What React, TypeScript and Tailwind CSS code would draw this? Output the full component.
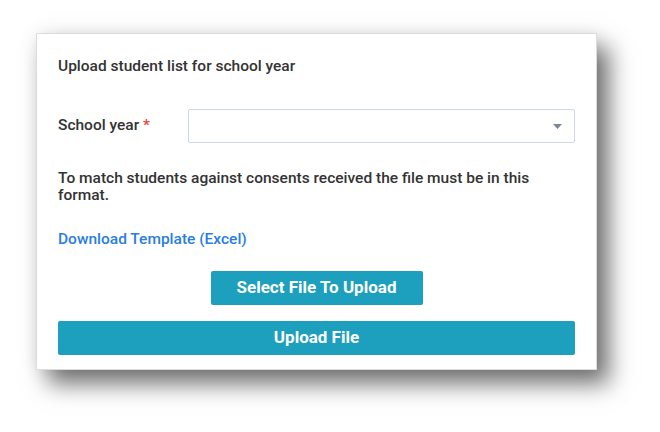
export default function App() {
  return (
    <div className="w-[660px] h-[432px] bg-white overflow-hidden font-['Roboto',sans-serif] text-[#333333]">
      <div className="ml-[36px] mt-[33px] w-[561px] h-[337px] bg-white border border-[#dcdcdc] shadow-[12px_14px_22px_rgba(0,0,0,0.55),0_0_18px_rgba(0,0,0,0.08)] px-[21px] pt-[22px]">
        <h2 className="text-[15.5px] leading-[20px] font-medium">Upload student list for school year</h2>

        <div className="mt-[33px] flex items-center">
          <label className="w-[130px] text-[15.5px] font-medium">
            School year <span className="text-[#f03e3e]">*</span>
          </label>
          <div className="flex-1 h-[34px] border border-[#cfd8e4] rounded-[2px] flex items-center justify-end pr-[12px]">
            <svg width="9" height="5" viewBox="0 0 9 5">
              <path d="M0 0 L9 0 L4.5 5 Z" fill="#7b8794" />
            </svg>
          </div>
        </div>

        <p className="mt-[27px] text-[15.5px] leading-[17px] font-medium w-[490px]">
          To match students against consents received the file must be in this format.
        </p>

        <a href="#" className="block mt-[25px] text-[15.5px] leading-[20px] font-medium text-[#2a7de1]">
          Download Template (Excel)
        </a>

        <div className="mt-[22px] flex justify-center">
          <button className="w-[212px] h-[34px] rounded-[2px] bg-[#1ca0be] text-white text-[17px] font-bold">
            Select File To Upload
          </button>
        </div>

        <button className="mt-[16px] w-full h-[34px] rounded-[2px] bg-[#1ca0be] text-white text-[17px] font-bold">
          Upload File
        </button>
      </div>
    </div>
  );
}
